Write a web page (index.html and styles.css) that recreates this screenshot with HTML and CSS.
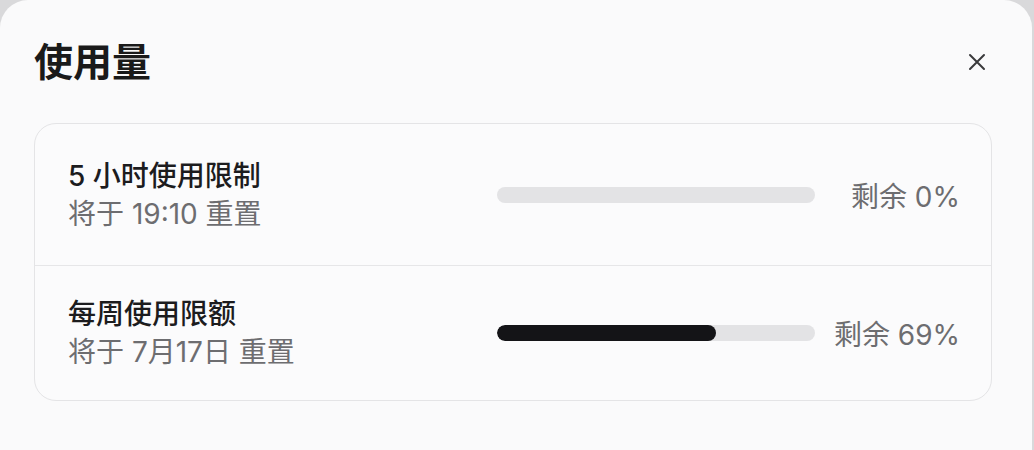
FILE: index.html
```html
<!DOCTYPE html>
<html lang="zh-CN">

<head>
  <meta charset="UTF-8">
  <meta name="viewport" content="width=device-width, initial-scale=1.0">
  <title>使用量</title>
  <link rel="stylesheet" href="styles.css">
</head>

<body>
  <div class="dialog">
    <div class="dialog-header">
      <h1>使用量</h1>
      <span class="close-btn" title="关闭">
        <svg width="18" height="18" viewBox="0 0 18 18">
          <path d="M2 2 L16 16 M16 2 L2 16" stroke="#3a3a3c" stroke-width="2" stroke-linecap="round" fill="none" />
        </svg>
      </span>
    </div>

    <div class="usage_list">
      <div class="usage_row">
        <div class="usage_info">
          <p class="usage_title">5 小时使用限制</p>
          <p class="usage_reset">将于 19:10 重置</p>
        </div>
        <div class="bar">
          <div class="bar_fill" style="width: 0%"></div>
        </div>
        <span class="usage_left">剩余 0%</span>
      </div>

      <div class="usage_row">
        <div class="usage_info">
          <p class="usage_title">每周使用限额</p>
          <p class="usage_reset">将于 7月17日 重置</p>
        </div>
        <div class="bar">
          <div class="bar_fill" style="width: 69%"></div>
        </div>
        <span class="usage_left">剩余 69%</span>
      </div>
    </div>
  </div>
</body>

</html>
```

FILE: styles.css
```css
body {
  margin: 0;
  padding: 0;
  background-color: #d9d9db;
  font-family: "Inter", "Noto Sans CJK SC", sans-serif;
  color: #1c1c1e;
  height: 100vh;
  overflow: hidden;
}

.dialog {
  width: 1032px;
  height: 480px;
  box-sizing: border-box;
  padding: 38px 40px 0 34px;
  background-color: #fafafb;
  border-radius: 28px;
}

.dialog-header {
  display: flex;
  align-items: center;
  justify-content: space-between;
  height: 48px;
}

h1 {
  margin: 0;
  font-size: 39px;
  font-weight: 600;
  line-height: 48px;
  color: #1a1a1a;
}

.close-btn {
  display: flex;
  margin-right: 6px;
  cursor: pointer;
}

.usage_list {
  margin-top: 37px;
  border: 1.5px solid #e4e4e6;
  border-radius: 22px;
  background-color: #fbfbfc;
}

.usage_row {
  display: flex;
  align-items: center;
  padding: 0 31px 0 33px;
  height: 141px;
}

.usage_row + .usage_row {
  border-top: 1.5px solid #e6e6e8;
  height: 134px;
}

.usage_info {
  flex: 1;
}

.usage_info p {
  margin: 0;
}

.usage_title {
  font-size: 28px;
  font-weight: 500;
  line-height: 38px;
  color: #1c1c1e;
}

.usage_reset {
  font-size: 28px;
  line-height: 38px;
  color: #6d6d70;
}

.bar {
  width: 318px;
  height: 16px;
  border-radius: 8px;
  background-color: #e3e3e5;
  overflow: hidden;
}

.bar_fill {
  height: 100%;
  border-radius: 8px;
  background-color: #141417;
}

.usage_left {
  width: 145px;
  text-align: right;
  font-size: 28px;
  color: #6d6d70;
}
```
